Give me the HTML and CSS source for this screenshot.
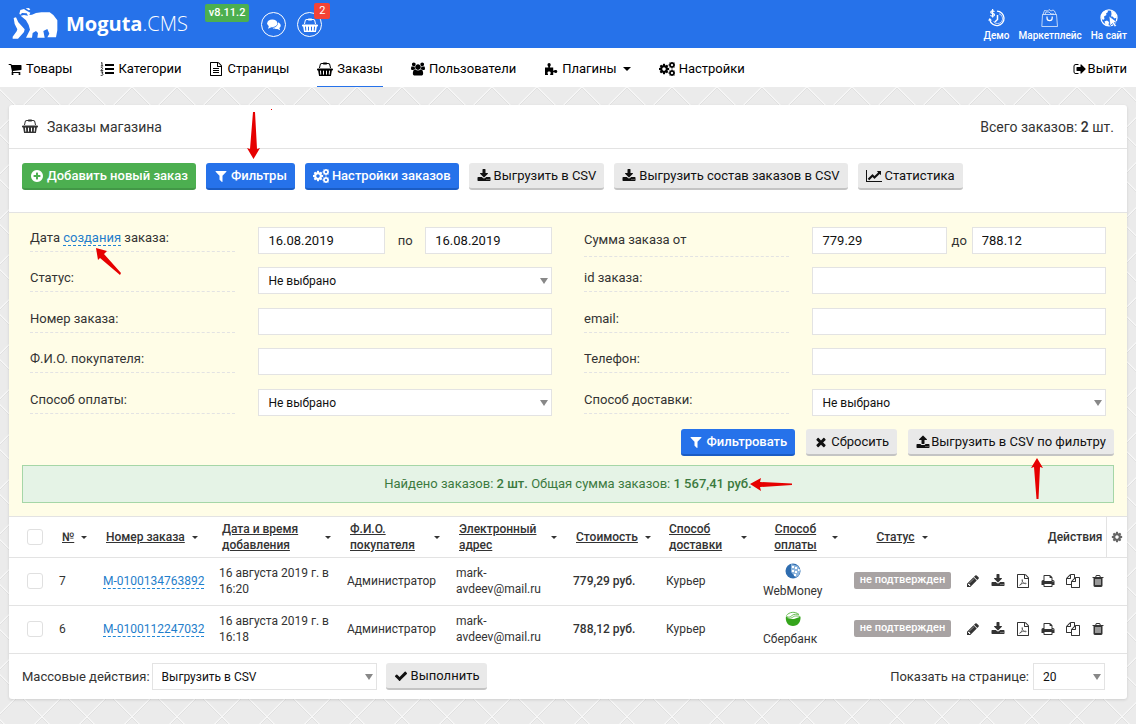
FILE: index.html
```html
<!DOCTYPE html>
<html lang="ru">
<head>
<meta charset="utf-8">
<meta name="viewport" content="width=device-width, initial-scale=1">
<title>Moguta.CMS — Заказы</title>
<link rel="stylesheet" href="styles.css">
</head>
<body>
<svg class="sprite" aria-hidden="true">
  <symbol id="basket" viewBox="0 0 2048 1792"><path d="M1920 832q53 0 90.5 37.5t37.5 90.5-37.5 90.5-90.5 37.5h-15l-115 662q-8 46-44 76t-82 30h-1280q-46 0-82-30t-44-76l-115-662h-15q-53 0-90.5-37.5t-37.5-90.5 37.5-90.5 90.5-37.5h1792zm-1435 800q26-2 43.5-22.5t15.5-46.5l-32-416q-2-26-22.5-43.5t-46.5-15.5-43.5 22.5-15.5 46.5l32 416q2 25 20.5 42t43.5 17h5zm411-64v-416q0-26-19-45t-45-19-45 19-19 45v416q0 26 19 45t45 19 45-19 19-45zm384 0v-416q0-26-19-45t-45-19-45 19-19 45v416q0 26 19 45t45 19 45-19 19-45zm352 5l32-416q2-26-15.5-46.5t-43.5-22.5-46.5 15.5-22.5 43.5l-32 416q-2 26 15.5 46.5t43.5 22.5h5q25 0 43.5-17t20.5-42zm-1156-1217l-93 412h-132l101-441q19-88 89-143.5t160-55.5h167q0-26 19-45t45-19h384q26 0 45 19t19 45h167q90 0 160 55.5t89 143.5l101 441h-132l-93-412q-11-44-45.5-72t-79.5-28h-167q0 26-19 45t-45 19h-384q-26 0-45-19t-19-45h-167q-45 0-79.5 28t-45.5 72z"/></symbol>
  <symbol id="cart" viewBox="0 0 1792 1792"><path d="M704 1536q0 52-38 90t-90 38-90-38-38-90 38-90 90-38 90 38 38 90zm896 0q0 52-38 90t-90 38-90-38-38-90 38-90 90-38 90 38 38 90zm128-1088v512q0 24-16.5 42.5t-40.5 21.5l-1044 122q13 60 13 70 0 16-24 64h920q26 0 45 19t19 45-19 45-45 19h-1024q-26 0-45-19t-19-45q0-11 8-31.5t16-36 21.5-40 15.5-29.5l-177-823h-204q-26 0-45-19t-19-45 19-45 45-19h256q16 0 28.5 6.5t19.5 15.5 13 24.5 8 26 5.5 29.5 4.5 26h1201q26 0 45 19t19 45z"/></symbol>
  <symbol id="list" viewBox="0 0 14 14"><path d="M5 2h9v2H5zM5 6h9v2H5zM5 10h9v2H5z"/><path d="M1 1.2l1-.7V4M.8 4h2.4M.8 5.8c1.2-.8 2.2 0 1.6 1L.8 8.6h2.4M.8 10h2.2L2 11.4c1.4 0 1.4 2-.2 2H.7" fill="none" stroke="currentColor" stroke-width=".8"/></symbol>
  <symbol id="page" viewBox="0 0 1792 1792"><path d="M1596 380q28 28 48 76t20 88v1152q0 40-28 68t-68 28h-1344q-40 0-68-28t-28-68v-1600q0-40 28-68t68-28h896q40 0 88 20t76 48zm-444-244v376h376q-10-29-22-41l-313-313q-12-12-41-22zm384 1528v-1024h-416q-40 0-68-28t-28-68v-416h-768v1536h1280zm-1024-864q0-14 9-23t23-9h704q14 0 23 9t9 23v64q0 14-9 23t-23 9h-704q-14 0-23-9t-9-23v-64zm736 224q14 0 23 9t9 23v64q0 14-9 23t-23 9h-704q-14 0-23-9t-9-23v-64q0-14 9-23t23-9h704zm0 256q14 0 23 9t9 23v64q0 14-9 23t-23 9h-704q-14 0-23-9t-9-23v-64q0-14 9-23t23-9h704z"/></symbol>
  <symbol id="pdf" viewBox="0 0 1792 1792"><path d="M1596 380q28 28 48 76t20 88v1152q0 40-28 68t-68 28h-1344q-40 0-68-28t-28-68v-1600q0-40 28-68t68-28h896q40 0 88 20t76 48zm-444-244v376h376q-10-29-22-41l-313-313q-12-12-41-22zm384 1528v-1024h-416q-40 0-68-28t-28-68v-416h-768v1536h1280z"/><path d="M480 1440c140-40 400-420 350-700-10-60-80-50-70 20 30 300 280 480 500 500 80 0 60-90-20-90-300 0-560 80-720 190-50 40-70 80-40 80z" fill="none" stroke="currentColor" stroke-width="80"/></symbol>
  <symbol id="users" viewBox="-64 0 1920 1792"><path d="M529 896q-162 5-265 128h-134q-82 0-138-40.5t-56-118.5q0-353 124-353 6 0 43.5 21t97.5 42.5 119 21.5q67 0 133-23-5 37-5 66 0 139 81 256zm1071 637q0 120-73 189.5t-194 69.5h-874q-121 0-194-69.5t-73-189.5q0-53 3.5-103.5t14-109 26.5-108.5 43-97.5 62-81 85.5-53.5 111.5-20q10 0 43 21.5t73 48 107 48 135 21.5 135-21.5 107-48 73-48 43-21.5q61 0 111.5 20t85.5 53.5 62 81 43 97.5 26.5 108.5 14 109 3.5 103.5zm-1024-1277q0 106-75 181t-181 75-181-75-75-181 75-181 181-75 181 75 75 181zm704 384q0 159-112.5 271.5t-271.5 112.5-271.5-112.5-112.5-271.5 112.5-271.5 271.5-112.5 271.5 112.5 112.5 271.5zm576 225q0 78-56 118.5t-138 40.5h-134q-103-123-265-128 81-117 81-256 0-29-5-66 66 23 133 23 59 0 119-21.5t97.5-42.5 43.5-21q124 0 124 353zm-128-609q0 106-75 181t-181 75-181-75-75-181 75-181 181-75 181 75 75 181z"/></symbol>
  <symbol id="puzzle" viewBox="0 0 14 14"><path d="M1 5.4h3.3c.3-.8-.8-1.200-.8-2.600C3.500 1.700 4.200 1 5.100 1s1.600.7 1.600 1.800c0 1.400-1 1.800-.8 2.600h3.300v3.200c.9.2 1.300-.6 2.500-.6 1 0 1.600.7 1.600 1.500s-.7 1.500-1.600 1.500c-1.200 0-1.600-.8-2.500-.6V13H6.200c-.3-.9.5-1.200.5-2.200 0-.9-.7-1.400-1.600-1.400s-1.600.5-1.600 1.400c0 1 .8 1.300.5 2.200H1z"/></symbol>
  <symbol id="cog" viewBox="0 0 1792 1792"><path d="M1152 896q0-106-75-181t-181-75-181 75-75 181 75 181 181 75 181-75 75-181zm512-109v222q0 12-8 23t-20 13l-185 28q-19 54-39 91 35 50 107 138 10 12 10 25t-9 23q-27 37-99 108t-94 71q-12 0-26-9l-138-108q-44 23-91 38-16 136-29 186-7 28-36 28h-222q-14 0-24.5-8.5t-11.5-21.500l-28-184q-49-16-90-37l-141 107q-10 9-25 9-14 0-25-11-126-114-165-168-7-10-7-23 0-12 8-23 15-21 51-66.5t54-70.5q-27-50-41-99l-183-27q-13-2-21-12.500t-8-23.500v-222q0-12 8-23t19-13l186-28q14-46 39-92-40-57-107-138-10-12-10-24 0-10 9-23 26-36 98.500-107.500t94.500-71.500q13 0 26 10l138 107q44-23 91-38 16-136 29-186 7-28 36-28h222q14 0 24.500 8.500t11.500 21.500l28 184q49 16 90 37l142-107q9-9 24-9 13 0 25 10 129 119 165 170 7 8 7 22 0 12-8 23-15 21-51 66.500t-54 70.500q26 50 41 98l183 28q13 2 21 12.500t8 23.500z"/></symbol>
  <symbol id="cogs" viewBox="0 0 16 14"><use href="#cog" x="-1" y="1" width="12" height="12"/><use href="#cog" x="9" y="-1" width="8" height="8"/><use href="#cog" x="9" y="7" width="8" height="8"/></symbol>
  <symbol id="exit" viewBox="0 0 1792 1792"><path d="M704 1440q0 4 1 20t.5 26.5-3 23.5-10 19.5-20.5 6.5h-320q-119 0-203.500-84.500t-84.500-203.500v-704q0-119 84.500-203.500t203.500-84.500h320q13 0 22.500 9.500t9.500 22.500q0 4 1 20t.5 26.500-3 23.500-10 19.500-20.500 6.500h-320q-66 0-113 47t-47 113v704q0 66 47 113t113 47h312l11.500 1 11.500 3 8 5.500 7 9 2 13.500zm928-544q0 26-19 45l-544 544q-19 19-45 19t-45-19-19-45v-288h-448q-26 0-45-19t-19-45v-384q0-26 19-45t45-19h448v-288q0-26 19-45t45-19 45 19l544 544q19 19 19 45z"/></symbol>
  <symbol id="plus" viewBox="0 0 1792 1792"><path d="M1344 960v-128q0-26-19-45t-45-19h-256v-256q0-26-19-45t-45-19h-128q-26 0-45 19t-19 45v256h-256q-26 0-45 19t-19 45v128q0 26 19 45t45 19h256v256q0 26 19 45t45 19h128q26 0 45-19t19-45v-256h256q26 0 45-19t19-45zm320-64q0 209-103 385.500t-279.500 279.500-385.500 103-385.500-103-279.500-279.500-103-385.500 103-385.500 279.500-279.500 385.500-103 385.500 103 279.500 279.500 103 385.500z"/></symbol>
  <symbol id="filter" viewBox="0 0 1792 1792"><path d="M1595 295q17 41-14 70l-493 493v742q0 42-39 59-13 5-25 5-27 0-45-19l-256-256q-19-19-19-45v-486l-493-493q-31-29-14-70 17-39 59-39h1280q42 0 59 39z"/></symbol>
  <symbol id="download" viewBox="0 0 1792 1792"><path d="M1344 1344q0-26-19-45t-45-19-45 19-19 45 19 45 45 19 45-19 19-45zm256 0q0-26-19-45t-45-19-45 19-19 45 19 45 45 19 45-19 19-45zm128-224v320q0 40-28 68t-68 28h-1472q-40 0-68-28t-28-68v-320q0-40 28-68t68-28h465l135 136q58 56 136 56t136-56l136-136h464q40 0 68 28t28 68zm-325-569q17 41-14 70l-448 448q-18 19-45 19t-45-19l-448-448q-31-29-14-70 17-39 59-39h256v-448q0-26 19-45t45-19h256q26 0 45 19t19 45v448h256q42 0 59 39z"/></symbol>
  <symbol id="upload" viewBox="0 0 1792 1792"><path d="M1344 1472q0-26-19-45t-45-19-45 19-19 45 19 45 45 19 45-19 19-45zm256 0q0-26-19-45t-45-19-45 19-19 45 19 45 45 19 45-19 19-45zm128-224v320q0 40-28 68t-68 28h-1472q-40 0-68-28t-28-68v-320q0-40 28-68t68-28h427q21 56 70.500 92t110.500 36h256q61 0 110.500-36t70.500-92h427q40 0 68 28t28 68zm-325-648q-17 40-59 40h-256v448q0 26-19 45t-45 19h-256q-26 0-45-19t-19-45v-448h-256q-42 0-59-40-17-39 14-69l448-448q18-19 45-19t45 19l448 448q31 30 14 69z"/></symbol>
  <symbol id="chart" viewBox="0 0 2048 1792"><path d="M2048 1536v128h-2048v-1536h128v1408h1920zm-128-1248v435q0 21-19.500 29.500t-35.500-7.500l-121-121-633 633q-10 10-23 10t-23-10l-233-233-416 416-192-192 585-585q10-10 23-10t23 10l233 233 464-464-121-121q-16-16-7.500-35.500t29.500-19.500h435q14 0 23 9t9 23z"/></symbol>
  <symbol id="check" viewBox="0 0 1792 1792"><path d="M1671 566q0 40-28 68l-724 724-136 136q-28 28-68 28t-68-28l-136-136-362-362q-28-28-28-68t28-68l136-136q28-28 68-28t68 28l294 295 656-657q28-28 68-28t68 28l136 136q28 28 28 68z"/></symbol>
  <symbol id="times" viewBox="0 0 1792 1792"><path d="M1490 1322q0 40-28 68l-136 136q-28 28-68 28t-68-28l-294-294-294 294q-28 28-68 28t-68-28l-136-136q-28-28-28-68t28-68l294-294-294-294q-28-28-28-68t28-68l136-136q28-28 68-28t68 28l294 294 294-294q28-28 68-28t68 28l136 136q28 28 28 68t-28 68l-294 294 294 294q28 28 28 68z"/></symbol>
  <symbol id="pencil" viewBox="0 0 1792 1792"><path d="M491 1536l91-91-235-235-91 91v107h128v128h107zm523-928q0-22-22-22-10 0-17 7l-542 542q-7 7-7 17 0 22 22 22 10 0 17-7l542-542q7-7 7-17zm-54-192l416 416-832 832h-416v-416zm683 96q0 53-37 90l-166 166-416-416 166-165q36-38 90-38 53 0 91 38l235 234q37 39 37 91z"/></symbol>
  <symbol id="print" viewBox="0 0 1792 1792"><path d="M448 1536h896v-256h-896v256zm0-640h896v-384h-160q-40 0-68-28t-28-68v-160h-640v640zm1152 64q0-26-19-45t-45-19-45 19-19 45 19 45 45 19 45-19 19-45zm128 0v416q0 13-9.500 22.500t-22.500 9.500h-224v160q0 40-28 68t-68 28h-960q-40 0-68-28t-28-68v-160h-224q-13 0-22.500-9.500t-9.500-22.500v-416q0-79 56.500-135.500t135.500-56.500h64v-544q0-40 28-68t68-28h672q40 0 88 20t76 48l152 152q28 28 48 76t20 88v256h64q79 0 135.500 56.500t56.500 135.500z"/></symbol>
  <symbol id="copy" viewBox="0 0 1792 1792"><path d="M1696 384q40 0 68 28t28 68v1216q0 40-28 68t-68 28h-960q-40 0-68-28t-28-68v-288h-544q-40 0-68-28t-28-68v-672q0-40 20-88t48-76l408-408q28-28 76-48t88-20h416q40 0 68 28t28 68v328q68-40 128-40h416zm-544 213l-299 299h299v-299zm-640-384l-299 299h299v-299zm196 647l316-316v-416h-384v416q0 40-28 68t-68 28h-416v640h512v-256q0-40 20-88t48-76zm956 804v-1152h-384v416q0 40-28 68t-68 28h-416v640h896z"/></symbol>
  <symbol id="trash" viewBox="0 0 1792 1792"><path d="M704 1376v-704q0-14-9-23t-23-9h-64q-14 0-23 9t-9 23v704q0 14 9 23t23 9h64q14 0 23-9t9-23zm256 0v-704q0-14-9-23t-23-9h-64q-14 0-23 9t-9 23v704q0 14 9 23t23 9h64q14 0 23-9t9-23zm256 0v-704q0-14-9-23t-23-9h-64q-14 0-23 9t-9 23v704q0 14 9 23t23 9h64q14 0 23-9t9-23zm-544-992h448l-48-117q-7-9-17-11h-317q-10 2-17 11zm928 32v64q0 14-9 23t-23 9h-96v948q0 83-47 143.500t-113 60.500h-832q-66 0-113-58.500t-47-141.500v-952h-96q-14 0-23-9t-9-23v-64q0-14 9-23t23-9h309l70-167q15-37 54-63t79-26h320q40 0 79 26t54 63l70 167h309q14 0 23 9t9 23z"/></symbol>
  <symbol id="comments" viewBox="0 0 14 12"><ellipse cx="5.300" cy="4.300" rx="5.100" ry="3.900"/><path d="M2 6.500l-1 3.200L5 8z"/><path d="M11 3.200c1.800.8 2.700 2 2.700 3.300 0 1-.5 1.900-1.400 2.500l.9 2.200-2.900-1.300c-2 .3-3.800-.1-5-1.100C8.500 8.700 11.200 6.500 11 3.200z"/></symbol>
</svg>

<div class="page">
  <header class="top">
    <a class="logo" href="#">
      <svg class="bear" viewBox="0 0 138 96" aria-hidden="true"><path d="M5 30l7-2 7 15 19 21-2 8-18 20H2v-6l12-16 2-6-8-16z"/><path d="M22 17l3-11 11-3 5 4 14 7-3 7 8-1 12-5 16-2h25l11 8 12 16v30l-4 21h-26l6-11-6-14-12 6 4 20H76l2-14-6-6-10 6-2 14H42l6-12 6-12-4-14-8-14-16-14 10-2 12 2-4-7-14-1-5 5z"/><path d="M41 1l10-1 4 5-5 2z"/></svg>
      <span><b>Moguta</b>.CMS</span>
    </a>
    <span class="version">v8.11.2</span>
    <button class="round" type="button" aria-label="Сообщения"><svg class="i14"><use href="#comments"/></svg></button>
    <button class="round" type="button" aria-label="Новые заказы"><svg class="i16"><use href="#basket"/></svg><span class="count">2</span></button>
    <div class="quick">
      <a href="#"><svg viewBox="0 0 18 18" class="i18"><g fill="none" stroke="currentColor"><path d="M9 2.200a7.200 7.200 0 1 1-7.200 8.800" stroke-width="1.300"/><path d="M11 4.800a5 5 0 1 1-5.500 7.700" stroke-width=".7"/><path d="M9.500 6v4.500L6.800 13" stroke-width="1.500"/><path d="M6.500 2.600C5 1.300 2.600 1.800 2.800 3.300c.2 1.300 3.600 1 3.700 2.600.1 1.500-2.500 1.800-4.100.5M4.600 0v8.500" stroke-width="1.200"/></g><path d="M0 11.500L1.800 9 4 11.500z"/></svg>Демо</a>
      <a href="#"><svg viewBox="0 0 18 18" class="i18"><g fill="none" stroke="currentColor" stroke-width=".7"><path d="M1.500 5.500h14l1 12H.8zM2 5.500l1.500-4 3 .5 1.500-1.500 2 1.500L12 1l1.500 1 1.500 3.500M4 5.500l1-2.500h3l2 2h3"/><path d="M6 7.500V9a2.600 2.600 0 0 0 5.200 0V7.500" stroke-width="1.200"/></g></svg>Маркетплейс</a>
      <a href="#"><svg viewBox="0 0 18 18" class="i18"><circle cx="9" cy="8.800" r="8" fill="none" stroke="currentColor" stroke-width="1.300"/><path d="M1.500 5c1-2 3-3.500 6-3.500L8 3 6 4.500 6.500 6 4 7.500l.5 2.500L3 11 1.200 9zM11 1.500l4 2 2 5-2.500 1-2-2-1.500 0 .5-2.500zM4.500 12.500l2.500-1 2 1.500-.5 3.500-3-1z"/><path d="M9 7l8 6-2.700.5 2.200 3.300-1.800 1.200-2.200-3.500L10 17z" stroke="#2672ea" stroke-width=".7"/></svg>На сайт</a>
    </div>
  </header>

  <nav class="menu">
    <a href="#"><svg class="i14"><use href="#cart"/></svg>Товары</a>
    <a href="#"><svg class="i14"><use href="#list"/></svg>Категории</a>
    <a href="#"><svg class="i14"><use href="#page"/></svg>Страницы</a>
    <a href="#" class="active"><svg class="i16"><use href="#basket"/></svg>Заказы</a>
    <a href="#"><svg class="i14"><use href="#users"/></svg>Пользователи</a>
    <a href="#"><svg class="i14"><use href="#puzzle"/></svg>Плагины <span class="caret"></span></a>
    <a href="#"><svg class="i16"><use href="#cogs"/></svg>Настройки</a>
    <a href="#" class="exit"><svg class="i14"><use href="#exit"/></svg>Выйти</a>
  </nav>

  <main class="card">
    <div class="card-head">
      <h1><svg class="i16"><use href="#basket"/></svg>Заказы магазина</h1>
      <span>Всего заказов: <b>2</b> шт.</span>
    </div>

    <div class="toolbar">
      <button type="button" class="btn green"><svg class="i14"><use href="#plus"/></svg>Добавить новый заказ</button>
      <button type="button" class="btn blue"><svg class="i14"><use href="#filter"/></svg>Фильтры</button>
      <button type="button" class="btn blue"><svg class="i16"><use href="#cogs"/></svg>Настройки заказов</button>
      <button type="button" class="btn"><svg class="i14"><use href="#download"/></svg>Выгрузить в CSV</button>
      <button type="button" class="btn"><svg class="i14"><use href="#download"/></svg>Выгрузить состав заказов в CSV</button>
      <button type="button" class="btn"><svg class="i16"><use href="#chart"/></svg>Статистика</button>
    </div>

    <form class="filters">
      <div class="filter-grid">
        <div class="pair"><label for="from">Дата <a href="#" class="dash">создания</a> заказа:</label><div class="range dates"><input id="from" value="16.08.2019"><label for="to">по</label><input id="to" value="16.08.2019"></div></div>
        <div class="pair tall"><label for="min">Сумма заказа от</label><div class="range"><input id="min" value="779.29"><label for="max">до</label><input id="max" value="788.12"></div></div>
        <div class="pair"><label for="status">Статус:</label><select id="status"><option>Не выбрано</option></select></div>
        <div class="pair"><label for="oid">id заказа:</label><input id="oid"></div>
        <div class="pair"><label for="num">Номер заказа:</label><input id="num"></div>
        <div class="pair"><label for="email">email:</label><input id="email"></div>
        <div class="pair"><label for="fio">Ф.И.О. покупателя:</label><input id="fio"></div>
        <div class="pair"><label for="tel">Телефон:</label><input id="tel"></div>
        <div class="pair"><label for="pay">Способ оплаты:</label><select id="pay"><option>Не выбрано</option></select></div>
        <div class="pair"><label for="ship">Способ доставки:</label><select id="ship"><option>Не выбрано</option></select></div>
      </div>
      <div class="filter-actions">
        <button type="button" class="btn blue"><svg class="i14"><use href="#filter"/></svg>Фильтровать</button>
        <button type="button" class="btn"><svg class="i14"><use href="#times"/></svg>Сбросить</button>
        <button type="button" class="btn tight"><svg class="i14"><use href="#upload"/></svg>Выгрузить в CSV по фильтру</button>
      </div>
      <p class="notice">Найдено заказов: <b>2 шт.</b> Общая сумма заказов: <b>1 567,41 руб.</b></p>
    </form>

    <table class="orders">
      <colgroup><col class="c-check"><col class="c-id"><col class="c-num"><col class="c-date"><col class="c-fio"><col class="c-mail"><col class="c-sum"><col class="c-ship"><col class="c-pay"><col class="c-status"><col class="c-act"><col class="c-cog"></colgroup>
      <thead>
        <tr>
          <th class="check"><input type="checkbox" aria-label="Выбрать все"></th>
          <th><div class="sort"><a href="#">№</a><span class="caret"></span></div></th>
          <th><div class="sort"><a href="#">Номер заказа</a><span class="caret"></span></div></th>
          <th><div class="sort wide"><a href="#">Дата и время<br>добавления</a><span class="caret"></span></div></th>
          <th><div class="sort wide"><a href="#">Ф.И.О.<br>покупателя</a><span class="caret"></span></div></th>
          <th><div class="sort wide"><a href="#">Электронный<br>адрес</a><span class="caret"></span></div></th>
          <th><div class="sort"><a href="#">Стоимость</a><span class="caret"></span></div></th>
          <th><div class="sort wide"><a href="#">Способ<br>доставки</a><span class="caret"></span></div></th>
          <th><div class="sort wide mid"><a href="#">Способ<br>оплаты</a><span class="caret"></span></div></th>
          <th><div class="sort center"><a href="#">Статус</a><span class="caret"></span></div></th>
          <th class="right">Действия</th>
          <th class="gear"><button type="button" class="icon" aria-label="Колонки"><svg class="i12"><use href="#cog"/></svg></button></th>
        </tr>
      </thead>
      <tbody>
        <tr>
          <td class="check"><input type="checkbox" aria-label="Заказ 7"></td><td>7</td><td><a href="#" class="dash">M-0100134763892</a></td><td>16 августа 2019 г. в 16:20</td><td>Администратор</td><td>mark-avdeev@mail.ru</td><td><b>779,29 руб.</b></td><td>Курьер</td>
          <td><div class="pay"><svg class="i16" viewBox="0 0 16 16"><circle cx="8" cy="8" r="7.500" fill="#2f6db0"/><path d="M6 1l7 2 2.500 5-2 5-3 1.500L6 9z" fill="#8fb6dd"/><path d="M7 3h2v2H7zM10 4h2v2h-2zM7 7h2v2H7zM10 8h2v2h-2zM13 6h1.500v2H13zM9 11h2v2H9z" fill="#fff"/></svg></div>WebMoney</td>
          <td><span class="state">не подтвержден</span></td>
          <td class="actions" colspan="2"><div><button type="button" class="icon" aria-label="Изменить"><svg class="i14"><use href="#pencil"/></svg></button><button type="button" class="icon" aria-label="Скачать"><svg class="i14"><use href="#download"/></svg></button><button type="button" class="icon" aria-label="PDF"><svg class="i14"><use href="#pdf"/></svg></button><button type="button" class="icon" aria-label="Печать"><svg class="i14"><use href="#print"/></svg></button><button type="button" class="icon" aria-label="Копировать"><svg class="i14"><use href="#copy"/></svg></button><button type="button" class="icon" aria-label="Удалить"><svg class="i14"><use href="#trash"/></svg></button></div></td>
        </tr>
        <tr>
          <td class="check"><input type="checkbox" aria-label="Заказ 6"></td><td>6</td><td><a href="#" class="dash">M-0100112247032</a></td><td>16 августа 2019 г. в 16:18</td><td>Администратор</td><td>mark-avdeev@mail.ru</td><td><b>788,12 руб.</b></td><td>Курьер</td>
          <td><div class="pay"><svg class="i16" viewBox="0 0 16 16"><path d="M1 5c4 5 9 3 14.500.5C16 11 13 15 8 15S0 11 1 5z" fill="#35a51c"/><path d="M1.500 4.500C4 1 10 0 14 3.500M1.500 5c3 3 5-1 7.500-1.500S13 3 14 4M2 6.500C6 9 8 5 10.500 5S13.500 5 15 5.500" fill="none" stroke="#69bd54" stroke-width="1"/></svg></div>Сбербанк</td>
          <td><span class="state">не подтвержден</span></td>
          <td class="actions" colspan="2"><div><button type="button" class="icon" aria-label="Изменить"><svg class="i14"><use href="#pencil"/></svg></button><button type="button" class="icon" aria-label="Скачать"><svg class="i14"><use href="#download"/></svg></button><button type="button" class="icon" aria-label="PDF"><svg class="i14"><use href="#pdf"/></svg></button><button type="button" class="icon" aria-label="Печать"><svg class="i14"><use href="#print"/></svg></button><button type="button" class="icon" aria-label="Копировать"><svg class="i14"><use href="#copy"/></svg></button><button type="button" class="icon" aria-label="Удалить"><svg class="i14"><use href="#trash"/></svg></button></div></td>
        </tr>
      </tbody>
    </table>

    <div class="card-foot">
      <label for="bulk">Массовые действия:</label>
      <select id="bulk" class="bulk"><option>Выгрузить в CSV</option></select>
      <button type="button" class="btn"><svg class="i14"><use href="#check"/></svg>Выполнить</button>
      <label for="per" class="push">Показать на странице:</label>
      <select id="per" class="per"><option>20</option></select>
    </div>
  </main>

  <svg class="pointers" width="1136" height="724" aria-hidden="true">
    <path d="M253 112h2l2 37 3-1-6.500 11-6.500-11 3 1z"/><path d="M271 109h1v1h-1z"/>
    <path d="M96 248l11 3-3 3 17 19-1 2-20-17-2 2z"/>
    <path d="M1037 458l6 10-3-1-1.500 32h-2l-2.500-32-3 1z"/>
    <path d="M750 484l11-6-1 4 32 1.500v1.500l-32 2 1 4z"/>
  </svg>
</div>
</body>
</html>
```
FILE: styles.css
```css
* { box-sizing: border-box; }
body {
  margin: 0;
  background: #fff;
  color: #333;
  font: 13px/16px Roboto, "Liberation Sans", sans-serif;
}
a { color: inherit; text-decoration: none; }
svg { display: block; flex: none; fill: currentColor; }
b { font-weight: 500; }
button { font: inherit; color: inherit; cursor: pointer; }
.sprite { position: absolute; width: 0; height: 0; }
.i12 { width: 12px; height: 12px; }
.i14 { width: 14px; height: 14px; }
.i16 { width: 16px; height: 14px; }
.i18 { width: 18px; height: 18px; }

.page {
  position: relative;
  padding-bottom: 25px;
  background-color: #ebebeb;
  background-image:
    linear-gradient(45deg, transparent 48%, #e0e0e0 49%, #f8f8f8 50%, transparent 52%),
    linear-gradient(-45deg, transparent 48%, #e0e0e0 49%, #f8f8f8 50%, transparent 52%);
  background-size: 45px 45px;
  background-position: 42px 42px;
}

.top {
  display: flex;
  height: 48px;
  padding: 0 9px 0 12px;
  background: #2672ea;
  color: #fff;
}
.logo {
  display: flex;
  align-items: center;
  gap: 8px;
  font: 300 20px/24px "Open Sans", sans-serif;
}
.logo b { font-weight: 700; }
.bear { width: 46px; height: 32px; }
.version {
  height: 18px;
  margin: 4px 12px 0 17px;
  padding: 0 4px;
  border-radius: 2px;
  background: #4caf50;
  font-size: 11px;
  font-weight: 500;
  line-height: 17px;
}
.round {
  position: relative;
  display: flex;
  align-items: center;
  justify-content: center;
  width: 25px;
  height: 25px;
  margin: 12px 11px 0 0;
  padding: 0;
  border: 1px solid #fff;
  border-radius: 50%;
  background: none;
  color: #fff;
}
.count {
  position: absolute;
  top: -10px;
  right: -9px;
  width: 16px;
  height: 16px;
  border-radius: 2px;
  background: #f44336;
  font-size: 11px;
  line-height: 16px;
}
.quick { display: flex; gap: 9px; margin-left: auto; }
.quick a {
  display: flex;
  flex-direction: column;
  align-items: center;
  gap: 2px;
  padding-top: 9px;
  font-size: 10px;
  font-weight: 500;
  line-height: 13px;
}

.menu {
  display: flex;
  gap: 28px;
  height: 39px;
  padding: 0 9px 0 8px;
  background: #fff;
  color: #000;
}
.menu a { display: flex; align-items: center; gap: 4px; padding-top: 3px; border-bottom: 1px solid transparent; }
.menu .active { border-color: #2672ea; }
.menu .exit { margin-left: auto; gap: 1px; }
.caret { flex: none; border: 3px solid transparent; border-top-color: currentColor; border-bottom: 0; }
.menu .caret { margin-left: 2px; border-width: 4px; border-bottom: 0; }

.card {
  margin: 18px 9px 0;
  border-radius: 3px;
  background: #fff;
  box-shadow: 0 1px 3px rgba(0, 0, 0, .12);
}
.card-head {
  display: flex;
  align-items: center;
  justify-content: space-between;
  height: 44px;
  padding: 1px 13px 0;
  border-bottom: 1px solid #e3e3e3;
  font-size: 14px;
}
.card-head h1 { display: flex; gap: 9px; margin: 0; font-size: 14px; font-weight: 400; }
.toolbar { display: flex; gap: 10px; padding: 14px 13px 22px; }

.btn {
  display: flex;
  align-items: center;
  gap: 3px;
  height: 27px;
  padding: 0 8px;
  border: 0;
  border-bottom: 2px solid #c4c4c4;
  border-radius: 3px;
  background: #e9e9e9;
  color: #111;
  white-space: nowrap;
}
.btn.green { border-color: #429746; background: #4caf50; color: #fff; font-weight: 500; }
.btn.blue { border-color: #1a5cc4; background: #2672ea; color: #fff; font-weight: 500; }
.btn.tight { gap: 1px; }

.filters {
  padding: 14px 13px 13px;
  border-top: 1px solid #e3e3e3;
  background: #fffde7;
}
.filter-grid {
  display: grid;
  grid-template-columns: 1fr 1fr;
  grid-template-rows: 40px 41px 40px 41px 27px;
  column-gap: 32px;
  padding: 0 8px;
}
.pair { display: grid; grid-template-columns: 7fr 10fr; column-gap: 23px; align-items: start; }
.pair > label { height: 25px; padding-top: 3px; border-bottom: 1px dashed #e3e3e3; }
.pair.tall > label { height: 30px; padding-top: 5px; }
.range { display: grid; grid-template-columns: 1fr 25px 1fr; align-items: center; text-align: center; }
.range.dates { grid-template-columns: 1fr 40px 1fr; }
.pair input, select {
  width: 100%;
  min-width: 0;
  height: 27px;
  padding: 0 9px;
  border: 1px solid #e3e3e3;
  border-radius: 0;
  background: #fff;
  color: #111;
  font: inherit;
}
select {
  appearance: none;
  background-image: url("data:image/svg+xml,%3Csvg xmlns='http://www.w3.org/2000/svg' width='8' height='6'%3E%3Cpath d='M0 0h8L4 6z' fill='%23888'/%3E%3C/svg%3E");
  background-repeat: no-repeat;
  background-position: right 3px center;
  font-size: 12px;
}
.dash { color: #1f7ecb; border-bottom: 1px dashed #1f86d6; white-space: nowrap; }
.filter-actions { display: flex; justify-content: flex-end; gap: 11px; margin: 13px 0 9px; }
.notice {
  margin: 0;
  padding: 10px;
  border: 1px solid #a5d6a7;
  background: #e5f3e6;
  color: #3c7a3f;
  text-align: center;
}

.orders { width: 100%; table-layout: fixed; border-collapse: collapse; font-size: 12px; }
.c-check { width: 42px; }
.c-id { width: 44px; }
.c-num { width: 116px; }
.c-date { width: 128px; }
.c-fio { width: 109px; }
.c-mail { width: 117px; }
.c-sum { width: 93px; }
.c-ship { width: 97px; }
.c-pay { width: 91px; }
.c-status { width: 112px; }
.c-act { width: 148px; }
.c-cog { width: 21px; }
.orders th, .orders td { padding: 0 8px; text-align: left; vertical-align: middle; }
.orders tr { border-top: 1px solid #e3e3e3; border-bottom: 1px solid #e3e3e3; }
.orders th { height: 41px; font-weight: 500; }
.orders td { height: 48px; padding-bottom: 2px; }
.orders .right { padding: 0 3px; text-align: right; }
.orders .gear { padding: 3px 0 0; border-left: 1px solid #e3e3e3; color: #666; }
.orders .check { padding: 0 0 0 18px; }
.orders td.check { padding-bottom: 2px; }
.sort { display: flex; align-items: center; gap: 7px; padding-left: 3px; }
.sort a { text-decoration: underline; white-space: nowrap; }
.sort.wide a { flex: 1; }
.sort.mid { text-align: center; }
.sort.center { justify-content: center; padding-left: 0; }
.check input {
  display: block;
  appearance: none;
  width: 16px;
  height: 16px;
  margin: 0;
  border: 1px solid #e0e0e0;
  border-radius: 3px;
  background: #fff;
}
.icon { padding: 0; border: 0; background: none; }
.gear .icon { margin-left: 4px; }
.pay { display: flex; justify-content: center; width: 60px; padding-bottom: 4px; }
.pay svg { height: 16px; }
.state {
  display: block;
  width: 97px;
  height: 17px;
  border-radius: 2px;
  background: #a8a3a3;
  color: #fff;
  font-size: 11px;
  font-weight: 500;
  line-height: 15px;
  text-align: center;
}
.orders .actions { padding: 0 0 2px; }
.actions div { display: flex; gap: 11px; padding-left: 8px; }

.card-foot { display: flex; align-items: center; gap: 9px; height: 45px; padding: 0 22px 0 13px; }
.card-foot label { margin-right: -7px; }
.card-foot .push { margin-left: auto; margin-right: -5px; }
.card-foot .bulk { width: 225px; }
.card-foot .per { width: 72px; }

.pointers { position: absolute; top: 0; left: 0; color: #e60000; pointer-events: none; }
```
